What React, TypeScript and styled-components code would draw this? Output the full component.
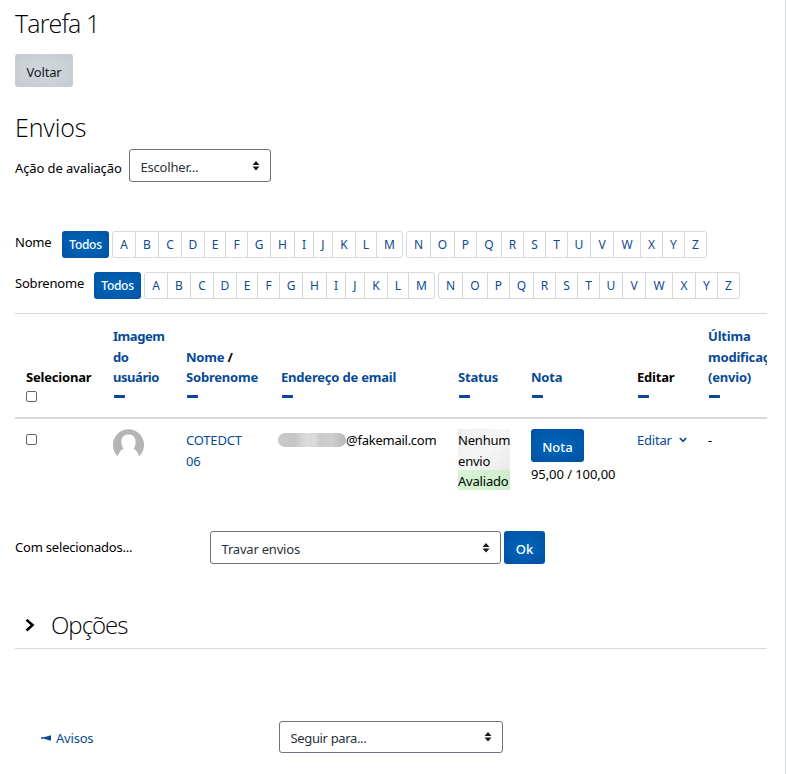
import React from "react";
import styled, { createGlobalStyle } from "styled-components";

const GlobalStyle = createGlobalStyle`
  *, *::before, *::after { box-sizing: border-box; }
  body {
    margin: 0;
    background: #fff;
    color: #000;
    font-family: "Noto Sans", "Open Sans", sans-serif;
    font-size: 13px;
    line-height: 20.6px;
    overflow: hidden;
  }
`;

const Page = styled.main`
  width: 786px;
  height: 774px;
  padding: 0 18px 0 15px;
  border-right: 1px solid #d5d8dd;
  overflow: hidden;
  white-space: nowrap;
`;

const Heading = styled.h2<{ $spacing?: number; $size?: number }>`
  margin: 0;
  height: 34px;
  font-family: "Open Sans", "Noto Sans", sans-serif;
  font-size: ${(p) => p.$size ?? 25}px;
  line-height: 32px;
  font-weight: 300;
  letter-spacing: ${(p) => p.$spacing ?? 0}px;
`;

const Text = styled.span<{ $spacing?: number }>`
  letter-spacing: ${(p) => p.$spacing ?? -0.2}px;
`;

const TitleBar = styled.header`
  padding-top: 7px;
`;

const Button = styled.button<{ $secondary?: boolean; $width: number }>`
  display: flex;
  align-items: center;
  justify-content: center;
  width: ${(p) => p.$width}px;
  height: 33px;
  padding: 3px 0 0;
  border: 0;
  border-radius: 3px;
  font: ${(p) => (p.$secondary ? 400 : 500)} 13px/20px "Noto Sans", sans-serif;
  color: ${(p) => (p.$secondary ? "#111820" : "#fff")};
  background: ${(p) =>
    p.$secondary
      ? "radial-gradient(ellipse at center, #d3d7dd, #c5cad2)"
      : "radial-gradient(ellipse at center, #0067bd, #0050a0)"};
`;

const BackButton = styled(Button)`
  margin-top: 13px;
  letter-spacing: -0.2px;
`;

const Submissions = styled.section`
  padding-top: 24px;
`;

const ActionRow = styled.div`
  display: flex;
  align-items: center;
  gap: 8px;
  height: 33px;
  margin-top: 4px;
`;

const ActionLabel = styled(Text)`
  width: 106px;
  padding-top: 5px;
`;

const SelectBox = styled.div<{ $width: number; $height?: number }>`
  display: flex;
  align-items: center;
  justify-content: space-between;
  width: ${(p) => p.$width}px;
  height: ${(p) => p.$height ?? 33}px;
  padding: 0 10.5px;
  border: 1px solid #6d7480;
  border-radius: 3px;
  color: #2a3138;
  background: #fff;
  > span { padding-top: 3px; }
`;

const Initials = styled.div`
  padding-top: 49px;
  display: grid;
  gap: 14px;
`;

const InitialRow = styled.div<{ $label: number }>`
  display: grid;
  grid-template-columns: ${(p) => p.$label}px 47px 291px max-content;
  column-gap: 3px;
  height: 27px;
`;

const InitialLabel = styled(Text)`
  padding-top: 1px;
`;

const AllButton = styled.button`
  height: 27px;
  padding: 0;
  border: 0;
  border-radius: 3px;
  color: #fff;
  font: 500 12px/26px "Noto Sans", sans-serif;
  letter-spacing: -0.3px;
  background: radial-gradient(ellipse at center, #0067bd, #0053a3);
`;

const LetterGroup = styled.div<{ $columns: string }>`
  display: grid;
  grid-template-columns: ${(p) => p.$columns};
  border: 1px solid #d5d8dd;
  border-radius: 3px;
`;

const Letter = styled.a`
  color: #0f4a8f;
  font-size: 12px;
  line-height: 25px;
  text-align: center;
  & + & { border-left: 1px solid #d5d8dd; }
`;

const TableClip = styled.div`
  width: 752px;
  margin-top: 14px;
  overflow: hidden;
`;

const Table = styled.table`
  width: 775px;
  table-layout: fixed;
  border-collapse: separate;
  border-spacing: 0;
`;

const Th = styled.th`
  height: 106px;
  padding: 9px 0 12px 11px;
  border-top: 1px solid #d5d8dd;
  border-bottom: 2px solid #d5d8dd;
  text-align: left;
  vertical-align: bottom;
  font-weight: 700;
  letter-spacing: -0.2px;
`;

const Td = styled.td`
  height: 84px;
  padding: 11px 0 0 11px;
  vertical-align: top;
  letter-spacing: -0.2px;
`;

const MediaTd = styled(Td)`
  padding-top: 10px;
`;

const Link = styled.a`
  color: #064a97;
`;

const TightLink = styled(Link)`
  letter-spacing: -0.45px;
`;

const HeadControl = styled.div`
  display: flex;
  align-items: center;
  height: 17px;
`;

const Dash = styled.i`
  width: 11px;
  height: 3px;
  margin-left: 1px;
  border-radius: 0.5px;
  background: #064a97;
`;

const Checkbox = styled.input`
  display: block;
  appearance: none;
  width: 11px;
  height: 11px;
  margin: 0;
  border: 1px solid #666;
  border-radius: 2px;
  background: #fff;
`;

const HeadCheckbox = styled(Checkbox)`
  margin-bottom: 1px;
`;

const RowCheckbox = styled(Checkbox)`
  margin-top: 5px;
`;

const Email = styled.div`
  display: flex;
  margin-left: -3px;
`;

const Redacted = styled.span`
  width: 68px;
  height: 14px;
  margin-top: 3px;
  border-radius: 7px;
  background: linear-gradient(90deg, #c9c9c9 0, #c5c5c5 25%, #dcdcdc 42%, #d9d9d9 55%, #c9c9c9 62%, #cfcfcf 78%, #b8b8b8 100%);
  filter: blur(0.7px);
`;

const Status = styled.div<{ $graded?: boolean }>`
  width: 52px;
  height: ${(p) => (p.$graded ? 20 : 41)}px;
  line-height: ${(p) => (p.$graded ? 22 : 21)}px;
  padding-top: ${(p) => (p.$graded ? 0 : 1)}px;
  background: ${(p) =>
    p.$graded
      ? "linear-gradient(100deg, #d5f6d3, #cfedcc)"
      : "linear-gradient(135deg, #efefef, #f6f6f6 55%, #e9e9e9)"};
`;

const Grade = styled.div`
  padding-top: 2px;
`;

const Edit = styled(Link)`
  display: flex;
  align-items: center;
  gap: 7px;
`;

const BulkRow = styled.div`
  display: grid;
  grid-template-columns: 195px 291px 44px;
  align-items: center;
  height: 33px;
  margin-top: 28px;
`;

const OkButton = styled(Button)`
  margin-left: 3px;
`;

const Options = styled.div`
  display: flex;
  align-items: center;
  gap: 16px;
  height: 45px;
  margin-top: 40px;
  padding-left: 10px;
  border-bottom: 1px solid #d9dadd;
`;

const Footer = styled.footer`
  display: grid;
  grid-template-columns: 239px 224px;
  align-items: center;
  height: 32px;
  margin-top: 72px;
  padding-left: 25px;
`;

const Previous = styled(Link)`
  display: flex;
  align-items: center;
  gap: 5px;
  padding: 2px 0 0 1px;
  letter-spacing: -0.2px;
`;

const SortArrows = () => (
  <svg width="8" height="10" viewBox="0 0 8 10" fill="#17191c">
    <path d="M4 0 7.5 4H.5zM.5 5.6h7L4 9.6z" />
  </svg>
);

type SelectProps = { label: string; width: number; height?: number; spacing?: number };
const Select = ({ label, width, height, spacing }: SelectProps) => (
  <SelectBox $width={width} $height={height} role="listbox">
    <Text $spacing={spacing}>{label}</Text>
    <SortArrows />
  </SelectBox>
);

const FIRST = "22px 23px 23px 23px 21px 22px 23px 24px 19px 19px 23px 21px 26px";
const SECOND = "23px 24px 22px 25px 22px 22px 22px 23px 23px 27px 22px 22px 22px";
const SECOND_WIDE = "23px 25px 22px 24px 22px 22px 22px 23px 23px 27px 23px 22px 22px";

type InitialBarProps = { label: string; width: number; second: string };
const InitialBar = ({ label, width, second }: InitialBarProps) => (
  <InitialRow $label={width}>
    <InitialLabel>{label}</InitialLabel>
    <AllButton>Todos</AllButton>
    <LetterGroup $columns={FIRST}>
      {[..."ABCDEFGHIJKLM"].map((l) => <Letter key={l}>{l}</Letter>)}
    </LetterGroup>
    <LetterGroup $columns={second}>
      {[..."NOPQRSTUVWXYZ"].map((l) => <Letter key={l}>{l}</Letter>)}
    </LetterGroup>
  </InitialRow>
);

const COLUMNS = [87, 73, 95, 177, 73, 106, 71, 93];
const Col = styled.col<{ $width: number }>`
  width: ${(p) => p.$width}px;
`;

const Collapse = () => <HeadControl><Dash /></HeadControl>;

export default function App() {
  return (
    <>
      <GlobalStyle />
      <Page>
        <TitleBar>
          <Heading $spacing={-0.85}>Tarefa 1</Heading>
          <BackButton $secondary $width={58}>Voltar</BackButton>
        </TitleBar>

        <Submissions>
          <Heading $spacing={-0.1}>Envios</Heading>
          <ActionRow>
            <ActionLabel $spacing={-0.1}>Ação de avaliação</ActionLabel>
            <Select label="Escolher..." width={142} />
          </ActionRow>
        </Submissions>

        <Initials>
          <InitialBar label="Nome" width={44} second={SECOND} />
          <InitialBar label="Sobrenome" width={76} second={SECOND_WIDE} />
        </Initials>

        <TableClip>
          <Table>
            <colgroup>{COLUMNS.map((w, i) => <Col key={i} $width={w} />)}</colgroup>
            <thead>
              <tr>
                <Th>Selecionar<HeadControl><HeadCheckbox type="checkbox" /></HeadControl></Th>
                <Th><TightLink>Imagem<br />do<br />usuário</TightLink><Collapse /></Th>
                <Th><Link>Nome</Link> /<br /><Link>Sobrenome</Link><Collapse /></Th>
                <Th><Link>Endereço de email</Link><Collapse /></Th>
                <Th><Link>Status</Link><Collapse /></Th>
                <Th><Link>Nota</Link><Collapse /></Th>
                <Th>Editar<Collapse /></Th>
                <Th><Link>Última<br />modificação<br />(envio)</Link><Collapse /></Th>
              </tr>
            </thead>
            <tbody>
              <tr>
                <MediaTd><RowCheckbox type="checkbox" /></MediaTd>
                <MediaTd>
                  <svg width="32" height="32" viewBox="0 0 32 32">
                    <path fill="#b5b5b5" d="M4.800 27.300A15.600 15.600 0 1 1 26.200 27.300C25.200 23.600 23.300 21.300 20.600 19.800C22 17.800 22.600 15.200 22.600 12.700C22.600 8.300 20 5.600 15.500 5.600S8.400 8.300 8.400 12.700C8.400 15.200 9 17.800 10.400 19.800C7.700 21.300 5.800 23.600 4.800 27.300Z" />
                  </svg>
                </MediaTd>
                <Td><Link>COTEDCT<br />06</Link></Td>
                <Td><Email><Redacted /><Text $spacing={-0.25}>@fakemail.com</Text></Email></Td>
                <MediaTd>
                  <Status>Nenhum<br />envio</Status>
                  <Status $graded>Avaliado</Status>
                </MediaTd>
                <MediaTd>
                  <Button $width={53}>Nota</Button>
                  <Grade><Text $spacing={-0.08}>95,00 / 100,00</Text></Grade>
                </MediaTd>
                <Td>
                  <Edit>
                    Editar
                    <svg width="8" height="6" viewBox="0 0 8 6" fill="none" stroke="#064a97" strokeWidth="1.7">
                      <path d="M.8 1 4 4.300 7.200 1" />
                    </svg>
                  </Edit>
                </Td>
                <Td>-</Td>
              </tr>
            </tbody>
          </Table>
        </TableClip>

        <BulkRow>
          <Text>Com selecionados...</Text>
          <Select label="Travar envios" width={291} />
          <OkButton $width={41}>Ok</OkButton>
        </BulkRow>

        <Options>
          <svg width="10" height="14" viewBox="0 0 10 14" fill="none" stroke="#000" strokeWidth="2.600">
            <path d="M1.500 .800 7.500 6.100 1.500 11.500" />
          </svg>
          <Heading $size={24} $spacing={-1}>Opções</Heading>
        </Options>

        <Footer>
          <Previous>
            <svg width="10" height="6" viewBox="0 0 10 6" fill="#064a97">
              <path d="M0 2.300H3L10 .300V5.700L3 3.700H0z" />
            </svg>
            Avisos
          </Previous>
          <Select label="Seguir para..." width={224} height={32} spacing={-0.35} />
        </Footer>
      </Page>
    </>
  );
}
